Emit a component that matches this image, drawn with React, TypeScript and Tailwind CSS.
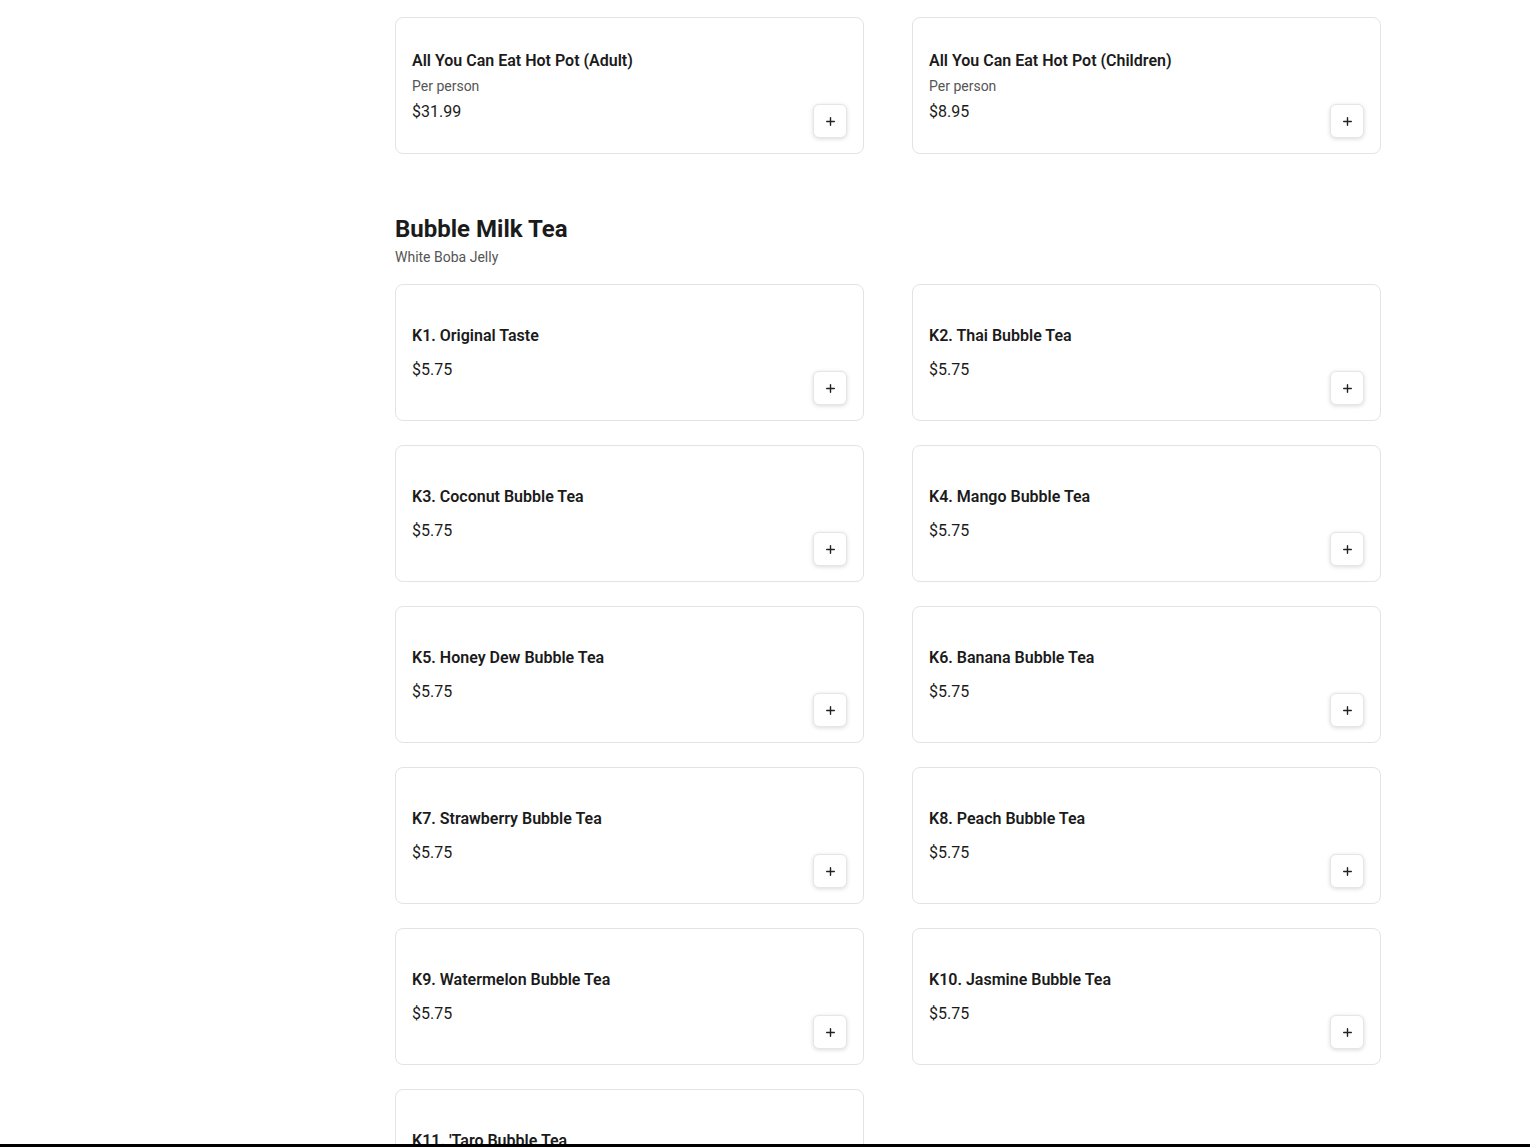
import { Plus } from 'lucide-react';

type Item = { name: string; desc?: string; price: string };

const hotPot: Item[] = [
  { name: 'All You Can Eat Hot Pot (Adult)', desc: 'Per person', price: '$31.99' },
  { name: 'All You Can Eat Hot Pot (Children)', desc: 'Per person', price: '$8.95' },
];

const bubbleTea: Item[] = [
  { name: 'K1. Original Taste', price: '$5.75' },
  { name: 'K2. Thai Bubble Tea', price: '$5.75' },
  { name: 'K3. Coconut Bubble Tea', price: '$5.75' },
  { name: 'K4. Mango Bubble Tea', price: '$5.75' },
  { name: 'K5. Honey Dew Bubble Tea', price: '$5.75' },
  { name: 'K6. Banana Bubble Tea', price: '$5.75' },
  { name: 'K7. Strawberry Bubble Tea', price: '$5.75' },
  { name: 'K8. Peach Bubble Tea', price: '$5.75' },
  { name: 'K9. Watermelon Bubble Tea', price: '$5.75' },
  { name: 'K10. Jasmine Bubble Tea', price: '$5.75' },
  { name: "K11. 'Taro Bubble Tea", price: '$5.75' },
];

function ItemCard({ item }: { item: Item }) {
  return (
    <div className="h-[137px] bg-white border border-[#e3e3e3] rounded-lg flex justify-between pl-4 pr-4 pb-[15px]">
      <div className={item.desc ? 'flex flex-col justify-center pt-[17px]' : 'flex flex-col justify-center pt-[15px]'}>
        <div className="text-base leading-6 font-semibold text-[#1b1b1b]">{item.name}</div>
        {item.desc ? (
          <>
            <div className="mt-[3px] text-sm leading-5 text-[#555]">{item.desc}</div>
            <div className="mt-1 text-base leading-6 text-[#1b1b1b]">{item.price}</div>
          </>
        ) : (
          <div className="mt-[10px] text-base leading-6 text-[#1b1b1b]">{item.price}</div>
        )}
      </div>
      <button className="self-end w-[34px] h-[34px] flex items-center justify-center bg-white border border-[#e6e6e6] rounded-md shadow-[0_1px_4px_rgba(0,0,0,0.15)] text-[#222]">
        <Plus size={13} strokeWidth={2.6} />
      </button>
    </div>
  );
}

export default function App() {
  return (
    <div className="min-h-screen bg-white" style={{ fontFamily: 'Roboto, "Liberation Sans", sans-serif' }}>
      <div className="flex">
        <aside className="w-[395px] shrink-0" />
        <main className="w-[986px] pt-[17px] pb-10">
          <div className="grid grid-cols-2 gap-x-[48px] gap-y-6">
            {hotPot.map((it) => (
              <ItemCard key={it.name} item={it} />
            ))}
          </div>

          <section className="mt-[59px]">
            <h2 className="text-2xl leading-8 font-bold text-[#1b1b1b]">Bubble Milk Tea</h2>
            <p className="mt-[2px] text-sm leading-5 text-[#555]">White Boba Jelly</p>
            <div className="mt-[17px] grid grid-cols-2 gap-x-[48px] gap-y-6">
              {bubbleTea.map((it) => (
                <ItemCard key={it.name} item={it} />
              ))}
            </div>
          </section>
        </main>
      </div>
      <div className="fixed bottom-0 left-0 right-0 h-[3px] bg-black" />
    </div>
  );
}
